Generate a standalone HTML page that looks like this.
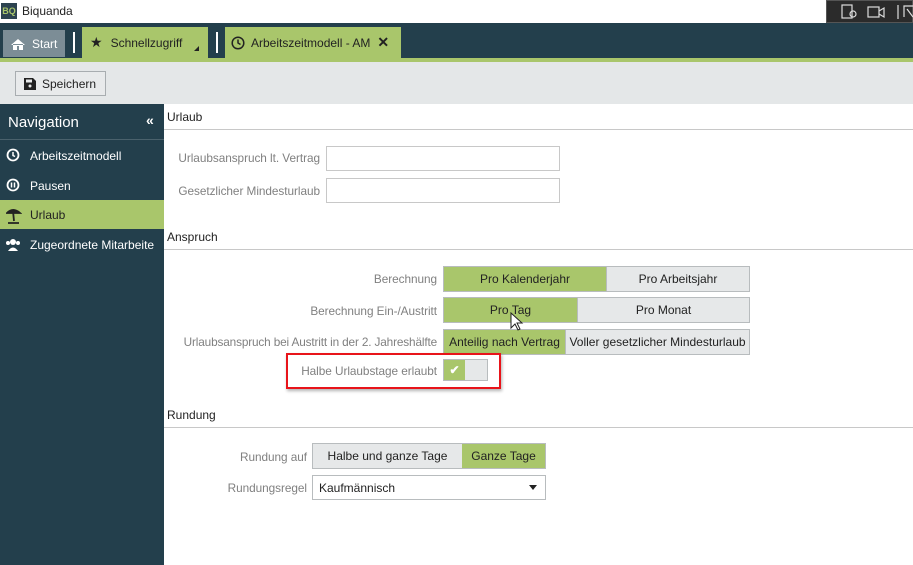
<!DOCTYPE html><html><head><style>
*{box-sizing:border-box;margin:0;padding:0}
body{width:913px;height:565px;overflow:hidden;font-family:"Liberation Sans",sans-serif;font-size:12px;color:#222;background:#fff;position:relative}
.a{position:absolute}
.lbl{position:absolute;color:#808080;text-align:right;font-size:11.8px;letter-spacing:-0.05px}
.seg{position:absolute;display:flex;border:1px solid #b8bcbe;height:26px}
.seg div{display:flex;align-items:center;justify-content:center;font-size:12px;color:#222}
.on{background:#a9c66b}.off{background:#e6e8e9}
.hd{position:absolute;left:167px;font-size:12px;color:#222}
.ln{position:absolute;left:164px;right:0;height:1px;background:#c8c8c8}
.nav{position:absolute;left:0;width:164px;height:29px;color:#fff;font-size:12px;display:flex;align-items:center;padding-left:30px}
</style></head><body>
<div class="a" style="left:0;top:0;width:913px;height:23px;background:#fff"></div>
<div class="a" style="left:1px;top:3px;width:16px;height:16px;background:#2d4350;color:#a9c66b;font-size:9px;font-weight:bold;line-height:16px;text-align:center">BQ</div>
<div class="a" style="left:22px;top:4px;font-size:12px">Biquanda</div>
<div class="a" style="left:826px;top:0;width:87px;height:23px;background:#2b2b2b;border:1px solid #555"></div>
<svg class="a" style="left:840px;top:3px" width="73" height="18" fill="none" stroke="#ddd" stroke-width="1.2"><rect x="2" y="2" width="10" height="13"/><circle cx="13" cy="11" r="3"/><rect x="28" y="4" width="11" height="10"/><path d="M39 8l5-3v9l-5-3"/><path d="M58 2v14"/><path d="M64 14V3h9M67 6l6 8"/></svg>
<div class="a" style="left:0;top:23px;width:913px;height:35px;background:#233f4c"></div>
<div class="a" style="left:0;top:58px;width:913px;height:4px;background:#a9c66b"></div>
<div class="a" style="left:3px;top:30px;width:62px;height:27px;background:#7c8d96;color:#fff;display:flex;align-items:center;padding-left:7px"><svg width="16" height="14"><path d="M1 8L8 2l7 6M3 7v6h4V9h2v4h4V7" fill="#fff"/></svg><span style="margin-left:6px">Start</span></div>
<div class="a" style="left:73px;top:32px;width:2px;height:21px;background:#fff"></div>
<div class="a" style="left:82px;top:27px;width:126px;height:31px;background:#a9c66b;display:flex;align-items:center;padding-left:8px"><span style="font-size:14px">★</span><span style="margin-left:8px">Schnellzugriff</span></div>
<div class="a" style="left:194px;top:46px;width:0;height:0;border-left:5px solid transparent;border-bottom:5px solid #222"></div>
<div class="a" style="left:216px;top:32px;width:2px;height:21px;background:#fff"></div>
<div class="a" style="left:225px;top:27px;width:176px;height:31px;background:#a9c66b;display:flex;align-items:center;padding-left:6px"><svg width="14" height="14"><circle cx="7" cy="7" r="5.8" fill="none" stroke="#222" stroke-width="1.5"/><path d="M7 3.5V7l2.5 1.5" stroke="#222" stroke-width="1.5" fill="none"/></svg><span style="margin-left:6px">Arbeitszeitmodell - AM</span><span style="margin-left:7px;font-weight:bold;font-size:14px">✕</span></div>
<div class="a" style="left:0;top:62px;width:913px;height:42px;background:#e4e7e8"></div>
<div class="a" style="left:15px;top:71px;width:91px;height:25px;border:1px solid #a8adb0;background:#e8eaeb;display:flex;align-items:center;padding-left:8px"><svg width="12" height="12"><path d="M0 0h9l3 3v9H0z" fill="#222"/><rect x="2" y="1.5" width="6" height="3" fill="#e8eaeb"/><circle cx="6" cy="8" r="1.5" fill="#e8eaeb"/></svg><span style="margin-left:6px">Speichern</span></div>
<div class="a" style="left:0;top:104px;width:164px;height:461px;background:#233f4c"></div>
<div class="a" style="left:8px;top:114px;color:#fff;font-size:15px">Navigation</div>
<div class="a" style="left:146px;top:112px;color:#fff;font-size:14px;font-weight:bold">«</div>
<div class="a" style="left:0;top:139px;width:164px;height:1px;background:#4a616c"></div>
<div class="nav" style="top:141px">Arbeitszeitmodell</div>
<div class="nav" style="top:171px">Pausen</div>
<div class="nav" style="top:200px;background:#a9c66b;color:#222">Urlaub</div>
<div class="nav" style="top:230px">Zugeordnete Mitarbeite</div>
<svg class="a" style="left:6px;top:147px" width="16" height="110"><circle cx="7" cy="8" r="5.5" fill="none" stroke="#fff" stroke-width="1.8"/><path d="M7 5v3.5l2 1" stroke="#fff" stroke-width="1.5" fill="none"/><circle cx="7" cy="38" r="5.5" fill="none" stroke="#fff" stroke-width="1.8"/><path d="M5.5 35.5v5M8.5 35.5v5" stroke="#fff" stroke-width="1.5"/><path d="M1 66q6-6 13 0zM7 64l1 10M2 76h11" stroke="#222" stroke-width="1.8" fill="#222"/><circle cx="7" cy="95" r="3" fill="#fff"/><path d="M2 104q5-7 10 0z" fill="#fff"/><circle cx="2" cy="96" r="2" fill="#fff"/><circle cx="12" cy="96" r="2" fill="#fff"/></svg>
<div class="hd" style="top:110px">Urlaub</div><div class="ln" style="top:129px"></div>
<div class="lbl" style="right:593px;top:151px">Urlaubsanspruch lt. Vertrag</div>
<div class="lbl" style="right:593px;top:184px">Gesetzlicher Mindesturlaub</div>
<div class="a" style="left:326px;top:146px;width:234px;height:25px;border:1px solid #c8c8c8"></div>
<div class="a" style="left:326px;top:178px;width:234px;height:25px;border:1px solid #c8c8c8"></div>
<div class="hd" style="top:230px">Anspruch</div><div class="ln" style="top:249px"></div>
<div class="lbl" style="right:476px;top:272px">Berechnung</div>
<div class="seg" style="left:443px;top:266px;width:307px"><div class="on" style="width:162px">Pro Kalenderjahr</div><div class="off" style="flex:1;border-left:1px solid #b8bcbe">Pro Arbeitsjahr</div></div>
<div class="lbl" style="right:476px;top:304px">Berechnung Ein-/Austritt</div>
<div class="seg" style="left:443px;top:297px;width:307px"><div class="on" style="width:133px">Pro Tag</div><div class="off" style="flex:1;border-left:1px solid #b8bcbe">Pro Monat</div></div>
<div class="lbl" style="right:476px;top:335px;letter-spacing:-0.15px">Urlaubsanspruch bei Austritt in der 2. Jahreshälfte</div>
<div class="seg" style="left:443px;top:329px;width:307px"><div class="on" style="width:121px">Anteilig nach Vertrag</div><div class="off" style="flex:1;border-left:1px solid #b8bcbe">Voller gesetzlicher Mindesturlaub</div></div>
<div class="a" style="left:286px;top:353px;width:215px;height:36px;border:2px solid #e8141a;box-shadow:1px 2px 3px rgba(0,0,0,.3)"></div>
<div class="lbl" style="right:476px;top:364px">Halbe Urlaubstage erlaubt</div>
<div class="a" style="left:443px;top:359px;width:45px;height:22px;border:1px solid #b8bcbe;background:#e6e8e9"><div style="width:21px;height:20px;background:#a9c66b;color:#fff;text-align:center;font-weight:bold;line-height:20px">✔</div></div>
<svg class="a" style="left:510px;top:312px" width="14" height="20"><path d="M1 1v15l4-4 3 6 2-1-3-6h5z" fill="#fff" stroke="#222"/></svg>
<div class="hd" style="top:408px">Rundung</div><div class="ln" style="top:427px"></div>
<div class="lbl" style="right:606px;top:450px">Rundung auf</div>
<div class="seg" style="left:312px;top:443px;width:234px"><div class="off" style="width:149px">Halbe und ganze Tage</div><div class="on" style="flex:1">Ganze Tage</div></div>
<div class="lbl" style="right:606px;top:481px">Rundungsregel</div>
<div class="a" style="left:312px;top:475px;width:234px;height:25px;border:1px solid #b8bcbe;padding:5px 6px">Kaufmännisch</div>
<div class="a" style="left:529px;top:485px;border-left:4px solid transparent;border-right:4px solid transparent;border-top:5px solid #222"></div>
</body></html>
